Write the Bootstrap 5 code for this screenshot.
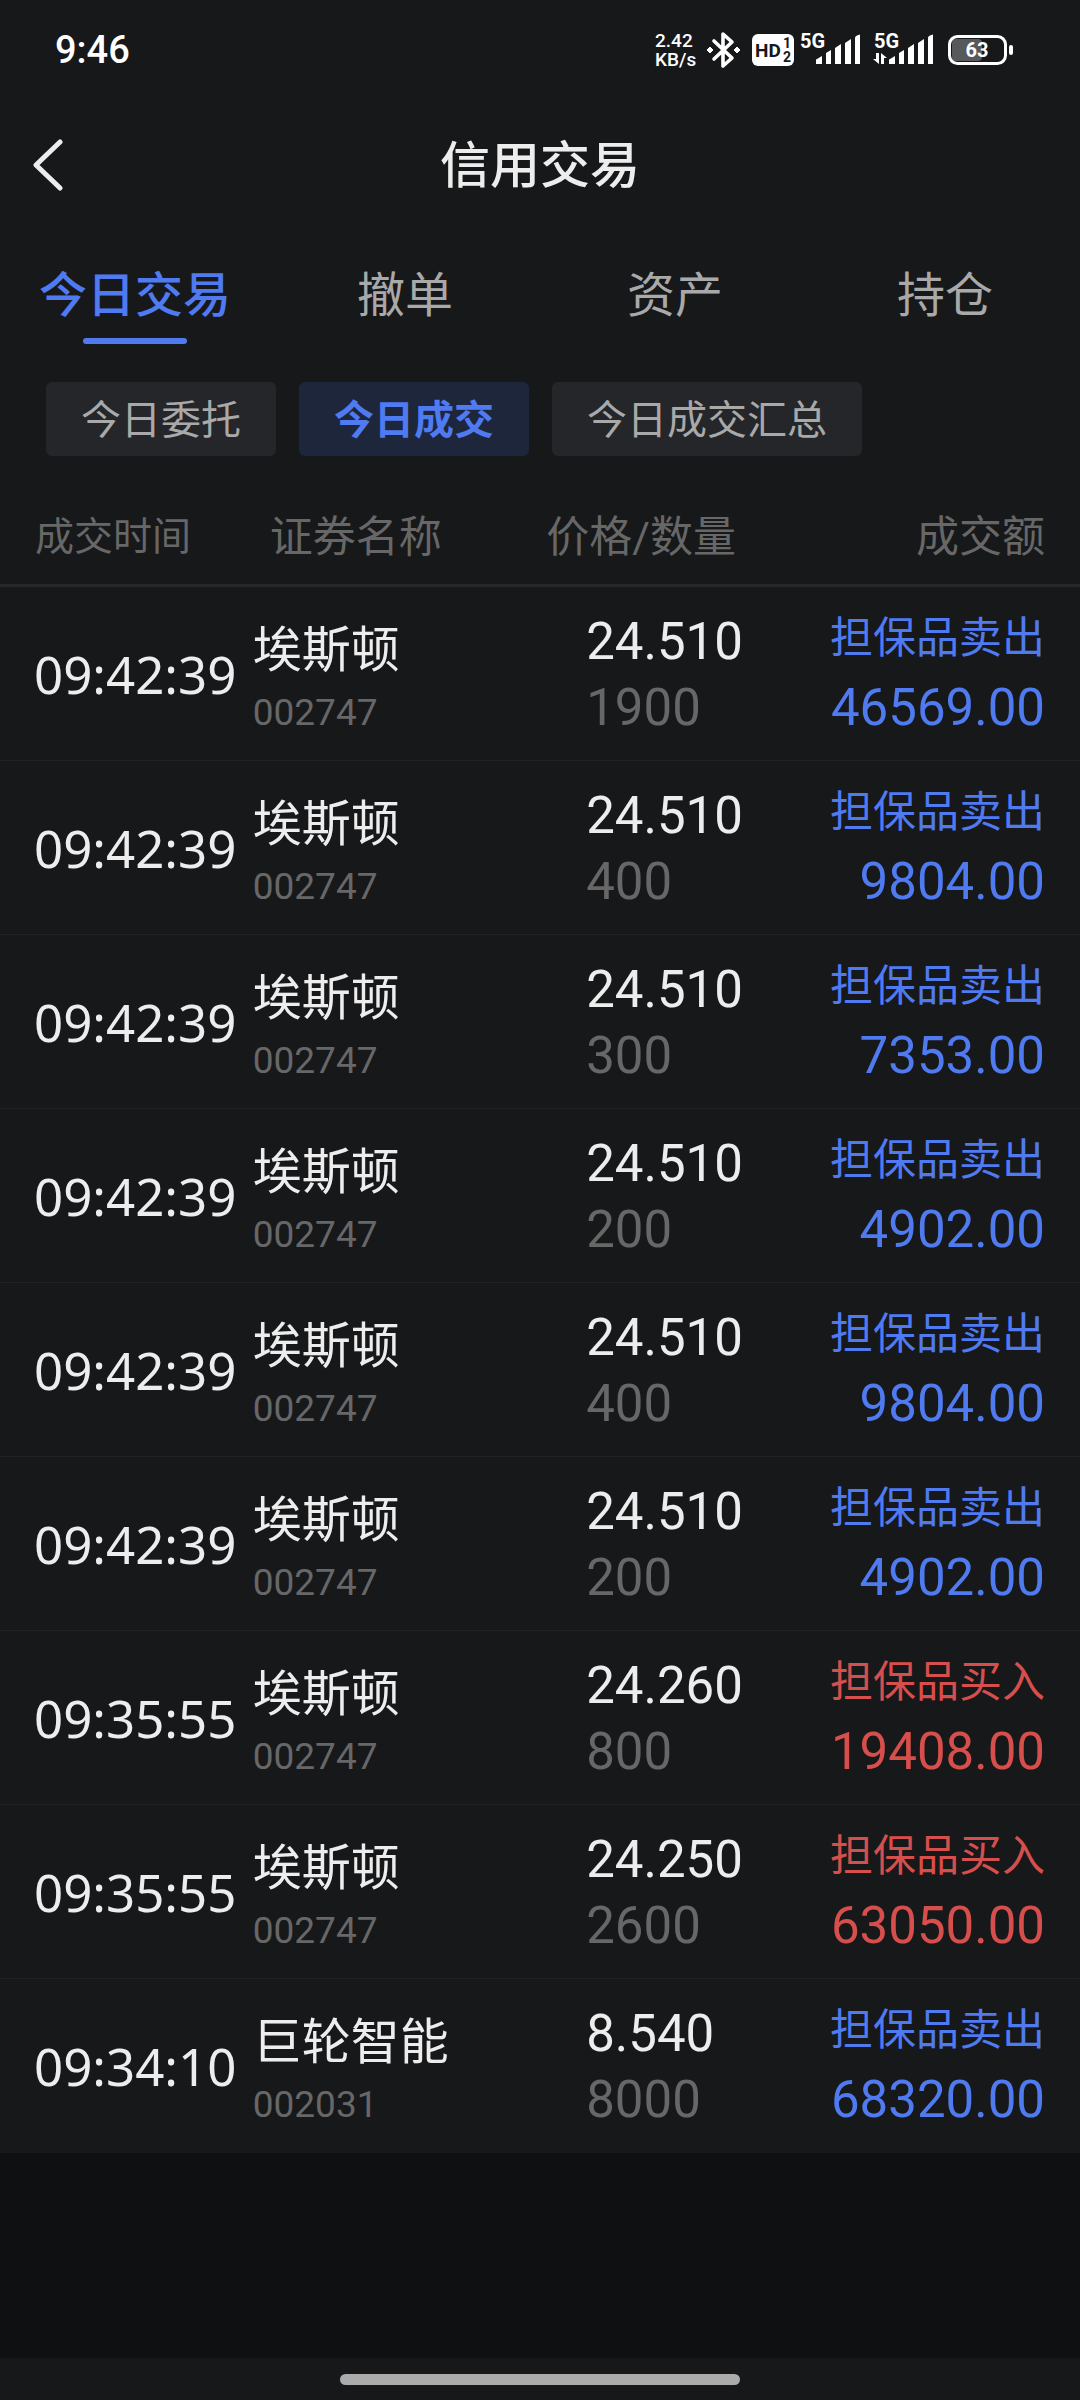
<!DOCTYPE html>
<html lang="zh-CN">
<head>
<meta charset="utf-8">
<meta name="viewport" content="width=device-width, initial-scale=1">
<title>信用交易</title>
<link href="https://cdn.jsdelivr.net/npm/bootstrap@5.3.0/dist/css/bootstrap.min.css" rel="stylesheet">
<style>
:root { --panel: #17181a; --ink: #ededed; --soft: #a9a9a9; --dim: #676767; --sell: #4f7af0; --buy: #d64f4c; }
body { background: #0f1012; color: var(--ink); font-family: Roboto, "Noto Sans CJK SC", sans-serif; }
.panel { background: var(--panel); }
.status { height: 100px; padding: 0 66px 0 55px; }
.clock { font-size: 38px; font-weight: 500; line-height: 50px; color: #fff; }
.speed { font-size: 19px; font-weight: 500; line-height: 19px; color: #fff; width: 42px; }
.status svg { display: block; fill: #fff; overflow: visible; }
.status svg text { font-family: Roboto, sans-serif; font-weight: 700; }
.bt { margin-left: 10px; }
.hd { margin-left: 12px; }
.sig-one { margin-left: 6px; }
.sig-two { margin-left: 12px; }
.batt { margin-left: 14px; }
.titlebar { height: 130px; }
.titlebar h1 { font-size: 50px; font-weight: 500; line-height: 132px; }
.back { width: 96px; height: 130px; padding: 0 0 0 32px; text-align: left; }
.tabs { padding-top: 31px; }
.tabs .nav-link { padding: 0; font-size: 48px; line-height: 70px; color: var(--soft); }
.tabs .nav-link::after { content: ""; display: block; width: 104px; height: 6px; margin: 7px auto 0; border-radius: 3px; }
.tabs .nav-link.active { color: var(--sell); font-weight: 500; }
.tabs .nav-link.active::after { background: var(--sell); }
.chips { padding: 38px 46px 0; gap: 23px; }
.chips .btn { height: 74px; padding: 4px 35px 0; border: 0; border-radius: 6px; font-size: 40px; line-height: 70px; color: var(--soft); background: #25262a; }
.chips .btn.active { background: #1e263b; color: var(--sell); font-weight: 700; }
.deals { table-layout: fixed; border-collapse: separate; border-spacing: 0; }
.deals th { padding: 45px 0 11px; font-size: 43px; font-weight: 400; line-height: 72px; color: var(--dim); border-bottom: 3px solid #27282a; white-space: nowrap; }
.deals .h-time { padding-left: 35px; font-size: 39px; }
.deals .h-name { padding-left: 17px; }
.deals td { height: 174px; padding: 0; vertical-align: middle; border-bottom: 1px solid #212224; white-space: nowrap; }
.deals tr:last-child td { border-color: var(--panel); }
.deals .time { padding-left: 34px; font-family: "Noto Sans", sans-serif; }
.deals .price { padding: 2px 0 0 44px; }
.deals .last { padding-right: 35px; text-align: right; }
.deals td div { font-size: 51px; line-height: 66px; }
.deals td .name { font-size: 49px; line-height: 77px; padding-top: 2px; }
.deals td .code { font-size: 37px; line-height: 48px; color: var(--dim); }
.deals td .side { font-size: 43px; line-height: 67px; padding-top: 2px; }
.deals td .sum { line-height: 72px; }
.qty { color: var(--dim); }
.sell { color: var(--sell); }
.buy { color: var(--buy); }
.homebar { height: 42px; padding-top: 16px; }
.homebar span { width: 400px; height: 11px; border-radius: 6px; background: #ababab; }
</style>
<script src="https://cdn.jsdelivr.net/npm/bootstrap@5.3.0/dist/js/bootstrap.bundle.min.js"></script>
</head>
<body class="d-flex flex-column min-vh-100">
<div class="panel status d-flex align-items-center">
  <div class="clock me-auto">9:46</div>
  <div class="speed"><div>2.42</div><div>KB/s</div></div>
  <svg class="bt" width="33" height="36" viewBox="0 0 33 36"><path d="M7 9 25 26 16 34V2l9 8L7 27" fill="none" stroke="#fff" stroke-width="3.6" stroke-linejoin="round" stroke-linecap="round"/><path d="m3 15 3 3-3 3-3-3zM30 15l3 3-3 3-3-3z" stroke="#fff"/></svg>
  <svg class="hd" width="42" height="32" viewBox="0 0 42 32"><rect width="42" height="32" rx="6"/><g fill="#17181a"><text x="3" y="23" font-size="19">HD</text><text x="31" y="14" font-size="14">1</text><text x="31" y="28" font-size="14">2</text></g></svg>
  <svg class="sig-one" width="61" height="32" viewBox="0 0 61 32"><text x="0" y="14" font-size="20">5G</text><path d="M16 30v-4q0-1 1-1l5-3v8zM26 30V19l5-3v14zM35 30V14l6-4v20zM45 30V9l6-4v25zM55 30V4q0-2 2-2.500l3-1v29.500z"/></svg>
  <svg class="sig-two" width="61" height="32" viewBox="0 0 61 32"><text x="1" y="14" font-size="20">5G</text><path d="M16 30v-4q0-1 1-1l5-3v8zM26 30V19l5-3v14zM35 30V14l6-4v20zM45 30V9l6-4v25zM55 30V4q0-2 2-2.500l3-1v29.500z"/><path d="M3 19h3v11L0 25h3zM8 30V19l6 5h-3v6z"/></svg>
  <svg class="batt" width="66" height="30" viewBox="0 0 66 30"><rect x="4" y="4" width="30" height="22" rx="4" fill="#58595b"/><rect x="1.500" y="1.500" width="56" height="27" rx="8" fill="none" stroke="#fff" stroke-width="3"/><rect x="61" y="10" width="4" height="10" rx="2"/><text x="29" y="22" font-size="20" text-anchor="middle">63</text></svg>
</div>
<header class="panel titlebar position-relative">
  <button type="button" class="btn back border-0 position-absolute top-0 start-0" aria-label="返回"><svg width="32" height="52" viewBox="0 0 32 52"><path d="M28 3 4 26l24 23" fill="none" stroke="#ededed" stroke-width="5" stroke-linecap="round" stroke-linejoin="round"/></svg></button>
  <h1 class="m-0 text-center">信用交易</h1>
</header>
<nav class="panel tabs nav nav-justified">
  <a class="nav-link active" aria-current="page" href="#">今日交易</a>
  <a class="nav-link" href="#">撤单</a>
  <a class="nav-link" href="#">资产</a>
  <a class="nav-link" href="#">持仓</a>
</nav>
<div class="panel chips d-flex">
  <button type="button" class="btn">今日委托</button>
  <button type="button" class="btn active">今日成交</button>
  <button type="button" class="btn">今日成交汇总</button>
</div>
<main class="flex-grow-1">
<table class="panel deals w-100">
  <colgroup><col style="width:23.4%"><col style="width:26.8%"><col style="width:22%"><col></colgroup>
  <thead><tr><th class="h-time" scope="col">成交时间</th><th class="h-name" scope="col">证券名称</th><th scope="col"><span class="ps-1">价格/数量</span></th><th class="last" scope="col">成交额</th></tr></thead>
  <tbody>
  <tr><td class="time"><div>09:42:39</div></td><td><div class="name">埃斯顿</div><div class="code">002747</div></td><td class="price"><div>24.510</div><div class="qty">1900</div></td><td class="last sell"><div class="side">担保品卖出</div><div class="sum">46569.00</div></td></tr>
  <tr><td class="time"><div>09:42:39</div></td><td><div class="name">埃斯顿</div><div class="code">002747</div></td><td class="price"><div>24.510</div><div class="qty">400</div></td><td class="last sell"><div class="side">担保品卖出</div><div class="sum">9804.00</div></td></tr>
  <tr><td class="time"><div>09:42:39</div></td><td><div class="name">埃斯顿</div><div class="code">002747</div></td><td class="price"><div>24.510</div><div class="qty">300</div></td><td class="last sell"><div class="side">担保品卖出</div><div class="sum">7353.00</div></td></tr>
  <tr><td class="time"><div>09:42:39</div></td><td><div class="name">埃斯顿</div><div class="code">002747</div></td><td class="price"><div>24.510</div><div class="qty">200</div></td><td class="last sell"><div class="side">担保品卖出</div><div class="sum">4902.00</div></td></tr>
  <tr><td class="time"><div>09:42:39</div></td><td><div class="name">埃斯顿</div><div class="code">002747</div></td><td class="price"><div>24.510</div><div class="qty">400</div></td><td class="last sell"><div class="side">担保品卖出</div><div class="sum">9804.00</div></td></tr>
  <tr><td class="time"><div>09:42:39</div></td><td><div class="name">埃斯顿</div><div class="code">002747</div></td><td class="price"><div>24.510</div><div class="qty">200</div></td><td class="last sell"><div class="side">担保品卖出</div><div class="sum">4902.00</div></td></tr>
  <tr><td class="time"><div>09:35:55</div></td><td><div class="name">埃斯顿</div><div class="code">002747</div></td><td class="price"><div>24.260</div><div class="qty">800</div></td><td class="last buy"><div class="side">担保品买入</div><div class="sum">19408.00</div></td></tr>
  <tr><td class="time"><div>09:35:55</div></td><td><div class="name">埃斯顿</div><div class="code">002747</div></td><td class="price"><div>24.250</div><div class="qty">2600</div></td><td class="last buy"><div class="side">担保品买入</div><div class="sum">63050.00</div></td></tr>
  <tr><td class="time"><div>09:34:10</div></td><td><div class="name">巨轮智能</div><div class="code">002031</div></td><td class="price"><div>8.540</div><div class="qty">8000</div></td><td class="last sell"><div class="side">担保品卖出</div><div class="sum">68320.00</div></td></tr>
  </tbody>
</table>
</main>
<footer class="panel homebar d-flex justify-content-center"><span></span></footer>
</body>
</html>
